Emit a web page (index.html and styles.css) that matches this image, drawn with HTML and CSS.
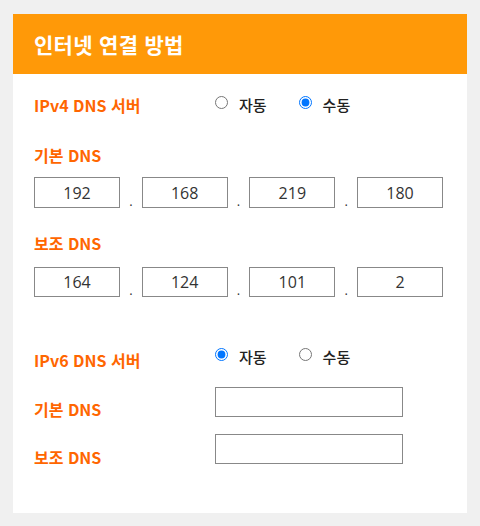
FILE: index.html
```html
<!DOCTYPE html>
<html lang="ko">
<head>
<meta charset="utf-8">
<title>인터넷 연결 방법</title>
<link rel="stylesheet" href="styles.css">
</head>
<body>
<div class="card">
  <div class="card-head">인터넷 연결 방법</div>
  <div class="card-body">
    <div class="server-row v4">
      <span class="label">IPv4 DNS 서버</span>
      <div class="radios">
        <label class="radio"><input type="radio" name="v4"><span>자동</span></label>
        <label class="radio"><input type="radio" name="v4" checked><span>수동</span></label>
      </div>
    </div>
    <div class="label sub first">기본 DNS</div>
    <div class="ip-row tall">
      <input class="ip" value="192"><span class="dot">.</span>
      <input class="ip" value="168"><span class="dot">.</span>
      <input class="ip" value="219"><span class="dot">.</span>
      <input class="ip" value="180">
    </div>
    <div class="label sub second">보조 DNS</div>
    <div class="ip-row">
      <input class="ip" value="164"><span class="dot">.</span>
      <input class="ip" value="124"><span class="dot">.</span>
      <input class="ip" value="101"><span class="dot">.</span>
      <input class="ip" value="2">
    </div>
    <div class="server-row v6">
      <span class="label">IPv6 DNS 서버</span>
      <div class="radios">
        <label class="radio"><input type="radio" name="v6" checked><span>자동</span></label>
        <label class="radio"><input type="radio" name="v6"><span>수동</span></label>
      </div>
    </div>
    <div class="field-row one">
      <span class="label">기본 DNS</span>
      <input class="wide">
    </div>
    <div class="field-row two">
      <span class="label">보조 DNS</span>
      <input class="wide">
    </div>
  </div>
</div>
</body>
</html>
```
FILE: styles.css
```css
* { box-sizing: border-box; }
html, body { margin: 0; padding: 0; }
body {
  background: #f0f0f0;
  padding: 14px 13px 12px;
  font-family: "Noto Sans CJK KR", "Noto Sans", sans-serif;
}
.card {
  width: 454px;
  background: #fff;
}
.card-head {
  height: 60px;
  background: #ff9908;
  color: #fff;
  font-size: 21px;
  font-weight: 700;
  line-height: 60px;
  padding-left: 21px;
  letter-spacing: 0.3px;
}
.card-body {
  padding: 20px 21px 47px;
}
.label {
  color: #ff6600;
  font-size: 16px;
  font-weight: 700;
  line-height: 20px;
  white-space: nowrap;
}
.server-row {
  display: flex;
  align-items: center;
  height: 20px;
}
.server-row .label { width: 181px; position: relative; top: 1px; }
.server-row.v6 { margin-top: 49px; }
.server-row.v6 .label { top: 4px; }
.radios { display: flex; align-items: center; }
.radio {
  display: flex;
  align-items: center;
  font-size: 15px;
  font-weight: 500;
  color: #222;
  margin-right: 32px;
}
.radio input {
  margin: 0 11px 0 0;
  width: 13px;
  height: 13px;
  position: relative;
  top: -2px;
}
.sub.first { margin-top: 31px; }
.sub.second { margin-top: 25px; }
.ip-row {
  display: flex;
  align-items: flex-end;
  width: 409px;
  height: 30px;
  margin-top: 14px;
}
.ip-row.tall { height: 31px; margin-top: 12px; }
.ip {
  width: 86px;
  height: 100%;
  border: 1px solid #888;
  border-radius: 0;
  padding: 0;
  text-align: center;
  font-family: "Open Sans", "Noto Sans CJK KR", sans-serif;
  font-size: 16px;
  color: #333;
  background: #fff;
  outline: none;
}
.dot {
  flex: 1;
  text-align: center;
  font-family: "Open Sans", sans-serif;
  font-size: 13px;
  color: #333;
  line-height: 14px;
}
.field-row {
  display: flex;
  align-items: flex-start;
  height: 32px;
}
.field-row .label {
  width: 181px;
  padding-top: 12px;
}
.field-row.one { margin-top: 21px; }
.field-row.two { margin-top: 15px; }
.field-row.two .label { padding-top: 13px; }
.wide {
  width: 188px;
  height: 30px;
  border: 1px solid #888;
  border-radius: 0;
  padding: 0 4px;
  background: #fff;
  outline: none;
}
```
